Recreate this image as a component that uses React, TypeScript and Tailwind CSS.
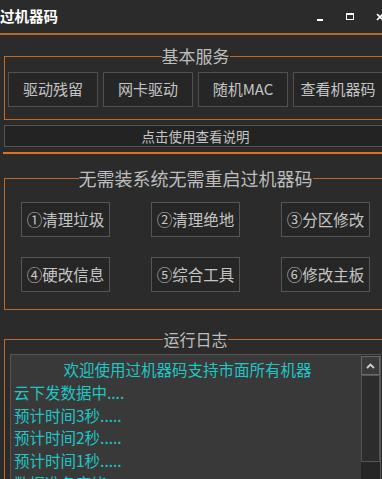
import React from 'react';

const basicButtons = ['驱动残留', '网卡驱动', '随机MAC', '查看机器码'];

const toolRows = [
  ['①清理垃圾', '②清理绝地', '③分区修改'],
  ['④硬改信息', '⑤综合工具', '⑥修改主板'],
];

const logLines = [
  '云下发数据中....',
  '预计时间3秒.....',
  '预计时间2秒.....',
  '预计时间1秒.....',
  '数据准备完毕...',
];

const TitleBar: React.FC = () => (
  <div className="flex h-[33px] items-center">
    <span className="text-[14.5px] font-bold leading-none text-white">过机器码</span>
    <div className="ml-auto flex items-center gap-[22px] pr-[7px]">
      <div className="flex w-[8px] justify-center pt-[7px]">
        <div className="h-[2px] w-[6px] bg-white" />
      </div>
      <div className="flex w-[8px] justify-center">
        <div className="h-[7px] w-[8px] border border-t-[2px] border-white" />
      </div>
      <div className="flex w-[8px] justify-center">
        <svg width="8" height="8" viewBox="0 0 8 8">
          <path d="M1 1 L7 7 M7 1 L1 7" stroke="#ffffff" strokeWidth="1.6" />
        </svg>
      </div>
    </div>
  </div>
);

const LogScrollbar: React.FC = () => (
  <div className="flex w-[19px] flex-col bg-[#262626] pt-px">
    <div className="flex h-[19px] items-center justify-center border border-[#6a6a6a] bg-[#3a3a3a]">
      <svg width="9" height="6" viewBox="0 0 9 6">
        <path d="M1 5 L4.5 1.5 L8 5" fill="none" stroke="#d0d0d0" strokeWidth="1.8" />
      </svg>
    </div>
    <div className="h-[87px] border border-[#555555] bg-[#2c2c2c]" />
  </div>
);

export default function App() {
  return (
    <div className="h-[479px] w-[382px] overflow-hidden bg-[#2b2b2b] font-['Noto_Sans_CJK_SC','Noto_Sans',sans-serif]">
      <div className="w-[391px]">
        <TitleBar />
        <div className="h-[2px] bg-[#b4652a]" />

        <fieldset className="mx-[4px] mt-[11px] border border-[#c06a2a] px-[3px] pb-[12px]">
          <legend className="mx-auto px-0 text-[17px] leading-[20px] text-[#bdbdbd]">基本服务</legend>
          <div className="flex gap-[5px] pt-[6px]">
            {basicButtons.map(label => (
              <div
                key={label}
                className="flex h-[35px] flex-1 items-center justify-center border border-[#505050] bg-[#262626] text-[15px] text-[#c4c4c4]"
              >
                {label}
              </div>
            ))}
          </div>
        </fieldset>

        <div className="mx-[4px] mt-[5px] flex h-[22px] items-center justify-center border border-[#555555] bg-[#232323] text-[13.5px] text-[#c4c4c4]">
          点击使用查看说明
        </div>
        <div className="mx-[3px] mt-[5px] h-[2px] bg-[#e0701c]" />

        <fieldset className="mx-[4px] mt-[13px] border border-[#c06a2a] px-[16px] pb-[17px]">
          <legend className="mx-auto px-0 text-[18px] leading-[22px] text-[#bdbdbd]">无需装系统无需重启过机器码</legend>
          <div className="flex flex-col gap-[20px] pt-[13px]">
            {toolRows.map((row, i) => (
              <div key={i} className="flex justify-between">
                {row.map(label => (
                  <div
                    key={label}
                    className="flex h-[35px] w-[89px] items-center justify-center border border-[#555555] bg-[#262626] text-[15.5px] text-[#c4c4c4]"
                  >
                    {label}
                  </div>
                ))}
              </div>
            ))}
          </div>
        </fieldset>

        <fieldset className="mx-[4px] mt-[19px] border border-[#c06a2a] px-[5px] pb-[10px]">
          <legend className="mx-auto px-0 text-[16px] leading-[20px] text-[#bdbdbd]">运行日志</legend>
          <div className="mt-[5px] flex h-[200px] border border-[#555555] bg-[#393939]">
            <div className="flex-1 pl-[3px] pt-[3px] text-[15.5px] leading-[22.75px] text-[#1fc6c6]">
              <div className="text-center">欢迎使用过机器码支持市面所有机器</div>
              {logLines.map(line => (
                <div key={line}>{line}</div>
              ))}
            </div>
            <LogScrollbar />
          </div>
        </fieldset>
      </div>
    </div>
  );
}
